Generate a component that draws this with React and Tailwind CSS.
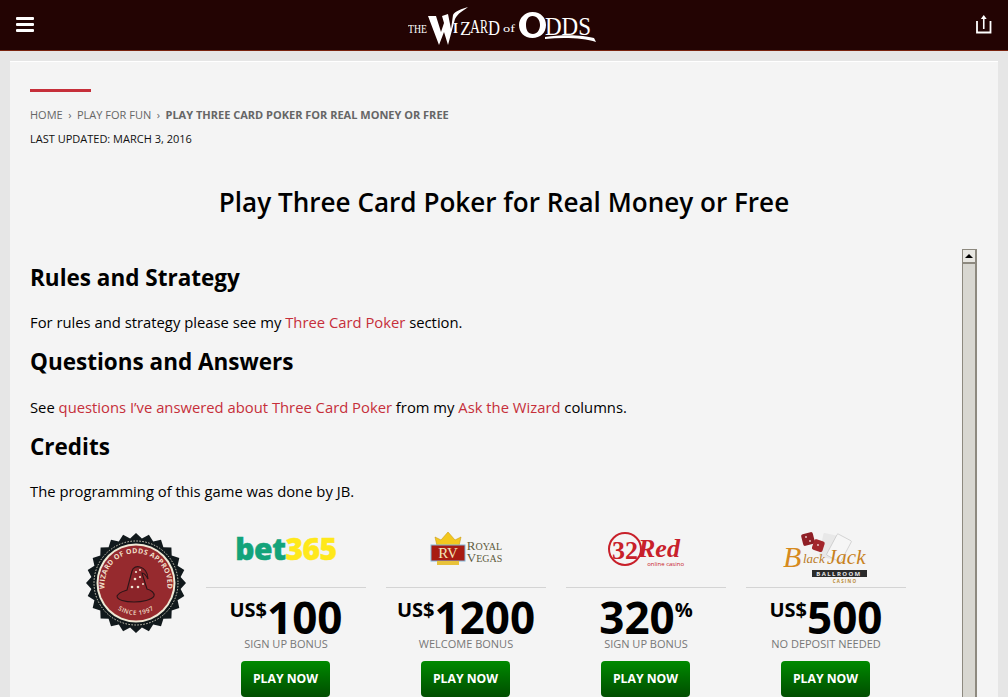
const OFFERS = [
  { id: 'bet365', prefix: 'US$', amount: '100', label: 'SIGN UP BONUS' },
  { id: 'royal', prefix: 'US$', amount: '1200', label: 'WELCOME BONUS' },
  { id: '32red', amount: '320', suffix: '%', label: 'SIGN UP BONUS' },
  { id: 'blackjack', prefix: 'US$', amount: '500', label: 'NO DEPOSIT NEEDED' },
]

function WizardLogo() {
  return (
    <svg width="192" height="46" viewBox="0 0 192 46" className="block">
      <g fill="#fff" fontFamily="'Liberation Serif', serif">
        <text x="0" y="31" fontSize="13" textLength="19" lengthAdjust="spacingAndGlyphs">THE</text>
        <path d="M20 14 L28 14 L33 30 L36 21 L34 14 L40 12 L43 27 L45 13 C47 9 54 7 60 5 C55 9 50 11 47 17 L40 43 L36 30 L31 43 Z" />
        <text x="45" y="31" fontSize="14" fontWeight="700" textLength="5" lengthAdjust="spacingAndGlyphs">I</text>
        <text x="52" y="33" fontSize="19" textLength="11" lengthAdjust="spacingAndGlyphs">Z</text>
        <text x="62" y="31" fontSize="18" textLength="10" lengthAdjust="spacingAndGlyphs">A</text>
        <text x="72" y="31" fontSize="18" textLength="8" lengthAdjust="spacingAndGlyphs">R</text>
        <text x="80" y="33" fontSize="22" textLength="12" lengthAdjust="spacingAndGlyphs">D</text>
        <text x="95" y="30" fontSize="11" textLength="12" lengthAdjust="spacingAndGlyphs">of</text>
        <path fillRule="evenodd" d="M124.500 10 C133 10 138 16 138 23 C138 31 132 36 124.500 36 C116 36 111 30 111 23 C111 16 117 10 124.500 10 Z M124.500 14 C120 14 118 18 118 23 C118 28 120 32 125 32 C129 32 132 28 132 23 C132 18 129 14 124.500 14 Z" />
        <text x="137" y="33" fontSize="26" textLength="46" lengthAdjust="spacingAndGlyphs">DDS</text>
        <path d="M137 35 C155 32 176 33 186 36 L188 40 C176 36 156 35 137 37 Z" />
      </g>
    </svg>
  )
}

function Seal() {
  const teeth = 24
  const points = []
  for (let i = 0; i < teeth * 2; i++) {
    const r = i % 2 === 0 ? 50 : 45
    const a = (i / (teeth * 2)) * Math.PI * 2
    points.push(`${(50 + r * Math.sin(a)).toFixed(1)},${(50 - r * Math.cos(a)).toFixed(1)}`)
  }
  return (
    <svg width="100" height="100" viewBox="0 0 100 100" className="block">
      <polygon points={points.join(' ')} fill="#11191c" />
      <circle cx="50" cy="50" r="42" fill="none" stroke="#d9d5c3" strokeWidth="1" strokeDasharray="1.5 1.5" />
      <circle cx="50" cy="50" r="39.5" fill="#efe9d6" />
      <circle cx="50" cy="50" r="37.5" fill="#962a2e" />
      <defs>
        <path id="sealTop" d="M21 64 A31.5 31.5 0 1 1 79 64" />
        <path id="sealBottom" d="M22 66 a32.5 32.5 0 0 0 56 0" />
      </defs>
      <text fontSize="7" fontWeight="700" fill="#f0dfc8" fontFamily="'Open Sans', sans-serif" letterSpacing="0.3">
        <textPath href="#sealTop" startOffset="50%" textAnchor="middle">WIZARD OF ODDS APPROVED</textPath>
      </text>
      <text fontSize="6.2" fontWeight="600" fill="#f0dfc8" fontFamily="'Open Sans', sans-serif" letterSpacing="0.5">
        <textPath href="#sealBottom" startOffset="50%" textAnchor="middle">SINCE 1997</textPath>
      </text>
      <path d="M31 63 C33 59 38 58 41 57 L46 38 C47 34 51 33 54 34 C58 35 62 39 62 46 C60 42 58 40 56 40 L61 56 C65 57 69 60 68 63 C66 67 56 69 48 69 C39 69 31 67 31 63 Z" fill="#8b2429" stroke="#2e1518" strokeWidth="1.1" />
      <g fill="#efe4d2">
        <circle cx="50" cy="39" r="1.1" />
        <circle cx="54" cy="37" r="1" />
        <circle cx="49" cy="46" r="1.3" />
        <circle cx="54" cy="44" r="1.1" />
        <circle cx="46" cy="54" r="1.3" />
        <circle cx="52" cy="54" r="1.3" />
        <circle cx="57" cy="51" r="1" />
      </g>
    </svg>
  )
}

function Bet365Logo() {
  return (
    <div className="font-['Open_Sans',sans-serif] text-[30px] leading-none font-extrabold tracking-[-0.5px] [-webkit-text-stroke:0.5px]">
      <span className="text-[#13a37a]">bet</span>
      <span className="text-[#ffe81a]">365</span>
    </div>
  )
}

function RoyalVegasLogo() {
  return (
    <div className="flex items-center gap-[1px]">
      <svg width="36" height="36" viewBox="0 0 36 36" className="block">
        <path d="M7 15 L5 6 L11 9 L18 1 L25 9 L31 6 L29 15 Z" fill="#f3c81e" stroke="#c99a12" strokeWidth="0.6" />
        <rect x="1" y="14" width="34" height="16" fill="#a81b12" stroke="#7fb6d8" strokeWidth="1" />
        <rect x="7" y="30" width="22" height="4" fill="#e8c23a" />
        <text x="18" y="27" fontSize="15" fill="#f5e7b8" textAnchor="middle" fontFamily="'Liberation Serif', serif">RV</text>
      </svg>
      <div className="font-['Liberation_Serif',serif] text-[#5d5a3c] text-[13px] leading-[11px] mt-[6px]">
        <div>R<span className="text-[10px]">OYAL</span></div>
        <div>V<span className="text-[10px]">EGAS</span></div>
      </div>
    </div>
  )
}

function RedLogo() {
  return (
    <svg width="78" height="36" viewBox="0 0 78 36" className="block">
      <circle cx="18" cy="18" r="16" fill="none" stroke="#c8202a" strokeWidth="2" />
      <text x="5" y="28" fontSize="26" fontWeight="700" fill="#c8202a" fontFamily="'Liberation Serif', serif">32</text>
      <text x="31" y="26" fontSize="26" fontWeight="700" fontStyle="italic" fill="#c8202a" fontFamily="'Liberation Serif', serif">Red</text>
      <text x="77" y="35" fontSize="6" fill="#c8202a" textAnchor="end" fontFamily="'Open Sans', sans-serif">online casino</text>
    </svg>
  )
}

function BlackjackLogo() {
  return (
    <svg width="86" height="52" viewBox="0 0 86 52" className="block">
      <rect x="38" y="3" width="15" height="24" rx="1" fill="#e8e8e8" transform="rotate(12 45 15)" />
      <rect x="48" y="5" width="16" height="24" rx="1" fill="#f6f6f6" stroke="#aaa" strokeWidth="0.4" transform="rotate(28 56 17)" />
      <rect x="19" y="2" width="12" height="12" rx="2" fill="#8f1f26" transform="rotate(-14 25 8)" />
      <rect x="30" y="9" width="11" height="11" rx="2" fill="#a3262c" transform="rotate(18 35 14)" />
      <g fill="#f0d6d6">
        <circle cx="23" cy="6" r="0.9" />
        <circle cx="27" cy="10" r="0.9" />
        <circle cx="35" cy="14" r="0.9" />
      </g>
      <text x="0" y="36" fontSize="30" fontStyle="italic" fill="#d68a1d" fontFamily="'Liberation Serif', serif">B</text>
      <text x="20" y="32" fontSize="13" fontStyle="italic" fill="#b97a1f" fontFamily="'Liberation Serif', serif">lack</text>
      <text x="44" y="33" fontSize="21" fontStyle="italic" fill="#c8821d" fontFamily="'Liberation Serif', serif">Jack</text>
      <rect x="29" y="39" width="55" height="7" fill="#2b2b2b" />
      <text x="56" y="45" fontSize="6" fontWeight="700" letterSpacing="1.4" fill="#e8e8e8" textAnchor="middle" fontFamily="'Open Sans', sans-serif">BALLROOM</text>
      <text x="62" y="51.5" fontSize="4.5" fontWeight="700" letterSpacing="1.2" fill="#b9892f" textAnchor="middle" fontFamily="'Open Sans', sans-serif">CASINO</text>
    </svg>
  )
}

function OfferLogo({ id }) {
  if (id === 'bet365') return <Bet365Logo />
  if (id === 'royal') return <RoyalVegasLogo />
  if (id === '32red') return <RedLogo />
  return <div className="mt-[16px]"><BlackjackLogo /></div>
}

function Offer({ offer }) {
  return (
    <div className="w-[160px] flex flex-col items-center">
      <div className="w-full h-[55px] flex items-center justify-center border-b border-[#d4d4d4] pb-[11px] box-content">
        <OfferLogo id={offer.id} />
      </div>
      <div className="flex items-start justify-center h-[42px] mt-[8px] text-black font-bold">
        {offer.prefix && <span className="text-[20px] leading-[20px] mt-[4px]">{offer.prefix}</span>}
        <span className="text-[44px] leading-[42px]">{offer.amount}</span>
        {offer.suffix && <span className="text-[20px] leading-[20px] mt-[4px]">{offer.suffix}</span>}
      </div>
      <div className="text-[11px] leading-[14px] text-[#777] -mt-[1px]">{offer.label}</div>
      <button className="mt-[10px] -ml-[1px] w-[89px] h-[36px] rounded-[4px] bg-gradient-to-b from-[#008a00] to-[#004d00] text-white text-[12.2px] font-bold">
        PLAY NOW
      </button>
    </div>
  )
}

function Scrollbar() {
  return (
    <div className="w-[15px] shrink-0 flex flex-col border-l border-r-2 border-[#8d897f] bg-[#d8d7d1]">
      <div className="h-[15px] border-t border-b-2 border-[#8d897f] bg-[#e8e7e2] flex items-center justify-center">
        <div className="w-0 h-0 border-x-[4px] border-x-transparent border-b-[4px] border-b-black" />
      </div>
    </div>
  )
}

export default function App() {
  return (
    <div className="h-[697px] overflow-hidden bg-[#e6e6e6] font-['Open_Sans',sans-serif] text-black">
      <header className="h-[51px] bg-[#230403] border-b border-[#7a2410] relative flex items-center justify-center">
        <div className="absolute left-[16px] top-[17px] w-[18px] flex flex-col gap-[3px]">
          <div className="h-[3px] bg-white rounded-[1px]" />
          <div className="h-[3px] bg-white rounded-[1px]" />
          <div className="h-[3px] bg-white rounded-[1px]" />
        </div>
        <WizardLogo />
        <svg width="16" height="20" viewBox="0 0 16 20" className="absolute left-[976px] top-[14px]">
          <path d="M1 7 V18.5 H14.5 V7" fill="none" stroke="#fff" strokeWidth="1.8" />
          <path d="M7.75 15 V3" stroke="#fff" strokeWidth="1.6" />
          <path d="M4.8 5 L7.75 1 L10.7 5 Z" fill="#fff" />
        </svg>
      </header>

      <main className="mx-[10px] mt-[10px] h-[640px] bg-[#f4f4f4] border-t border-white pl-[20px] pr-[21px] pt-[27px]">
        <div className="w-[61px] h-[3px] bg-[#c62f3a]" />
        <nav className="mt-[15px] flex items-center text-[11px] leading-[16px] text-[#666]">
          <span>HOME</span>
          <span className="mx-[5.5px]">›</span>
          <span>PLAY FOR FUN</span>
          <span className="mx-[5.5px]">›</span>
          <span className="font-bold">PLAY THREE CARD POKER FOR REAL MONEY OR FREE</span>
        </nav>
        <p className="mt-[8px] text-[11px] leading-[16px] text-[#111]">LAST UPDATED: MARCH 3, 2016</p>
        <h1 className="mt-[37px] text-center text-[26.1px] leading-[36px] font-semibold ml-[-20px] mr-[-21px]">
          Play Three Card Poker for Real Money or Free
        </h1>

        <div className="mt-[29px] flex">
          <div className="flex-1 min-w-0">
            <h2 className="mt-[13px] text-[22.5px] leading-[32px] font-bold">Rules and Strategy</h2>
            <p className="mt-[17px] text-[14.8px] leading-[22px]">
              For rules and strategy please see my <a className="text-[#c62f3a]">Three Card Poker</a> section.
            </p>
            <h2 className="mt-[13px] text-[22.5px] leading-[32px] font-bold">Questions and Answers</h2>
            <p className="mt-[18px] text-[14.8px] leading-[22px]">
              See <a className="text-[#c62f3a]">questions I’ve answered about Three Card Poker</a> from my <a className="text-[#c62f3a]">Ask the Wizard</a> columns.
            </p>
            <h2 className="mt-[13px] text-[22.5px] leading-[32px] font-bold">Credits</h2>
            <p className="mt-[17px] text-[14.8px] leading-[22px]">The programming of this game was done by JB.</p>

            <div className="mt-[19px] flex justify-center gap-[20px]">
              <div className="w-[100px] pt-[12px] shrink-0">
                <Seal />
              </div>
              {OFFERS.map((offer) => (
                <Offer key={offer.id} offer={offer} />
              ))}
            </div>
          </div>
          <Scrollbar />
        </div>
      </main>
    </div>
  )
}
